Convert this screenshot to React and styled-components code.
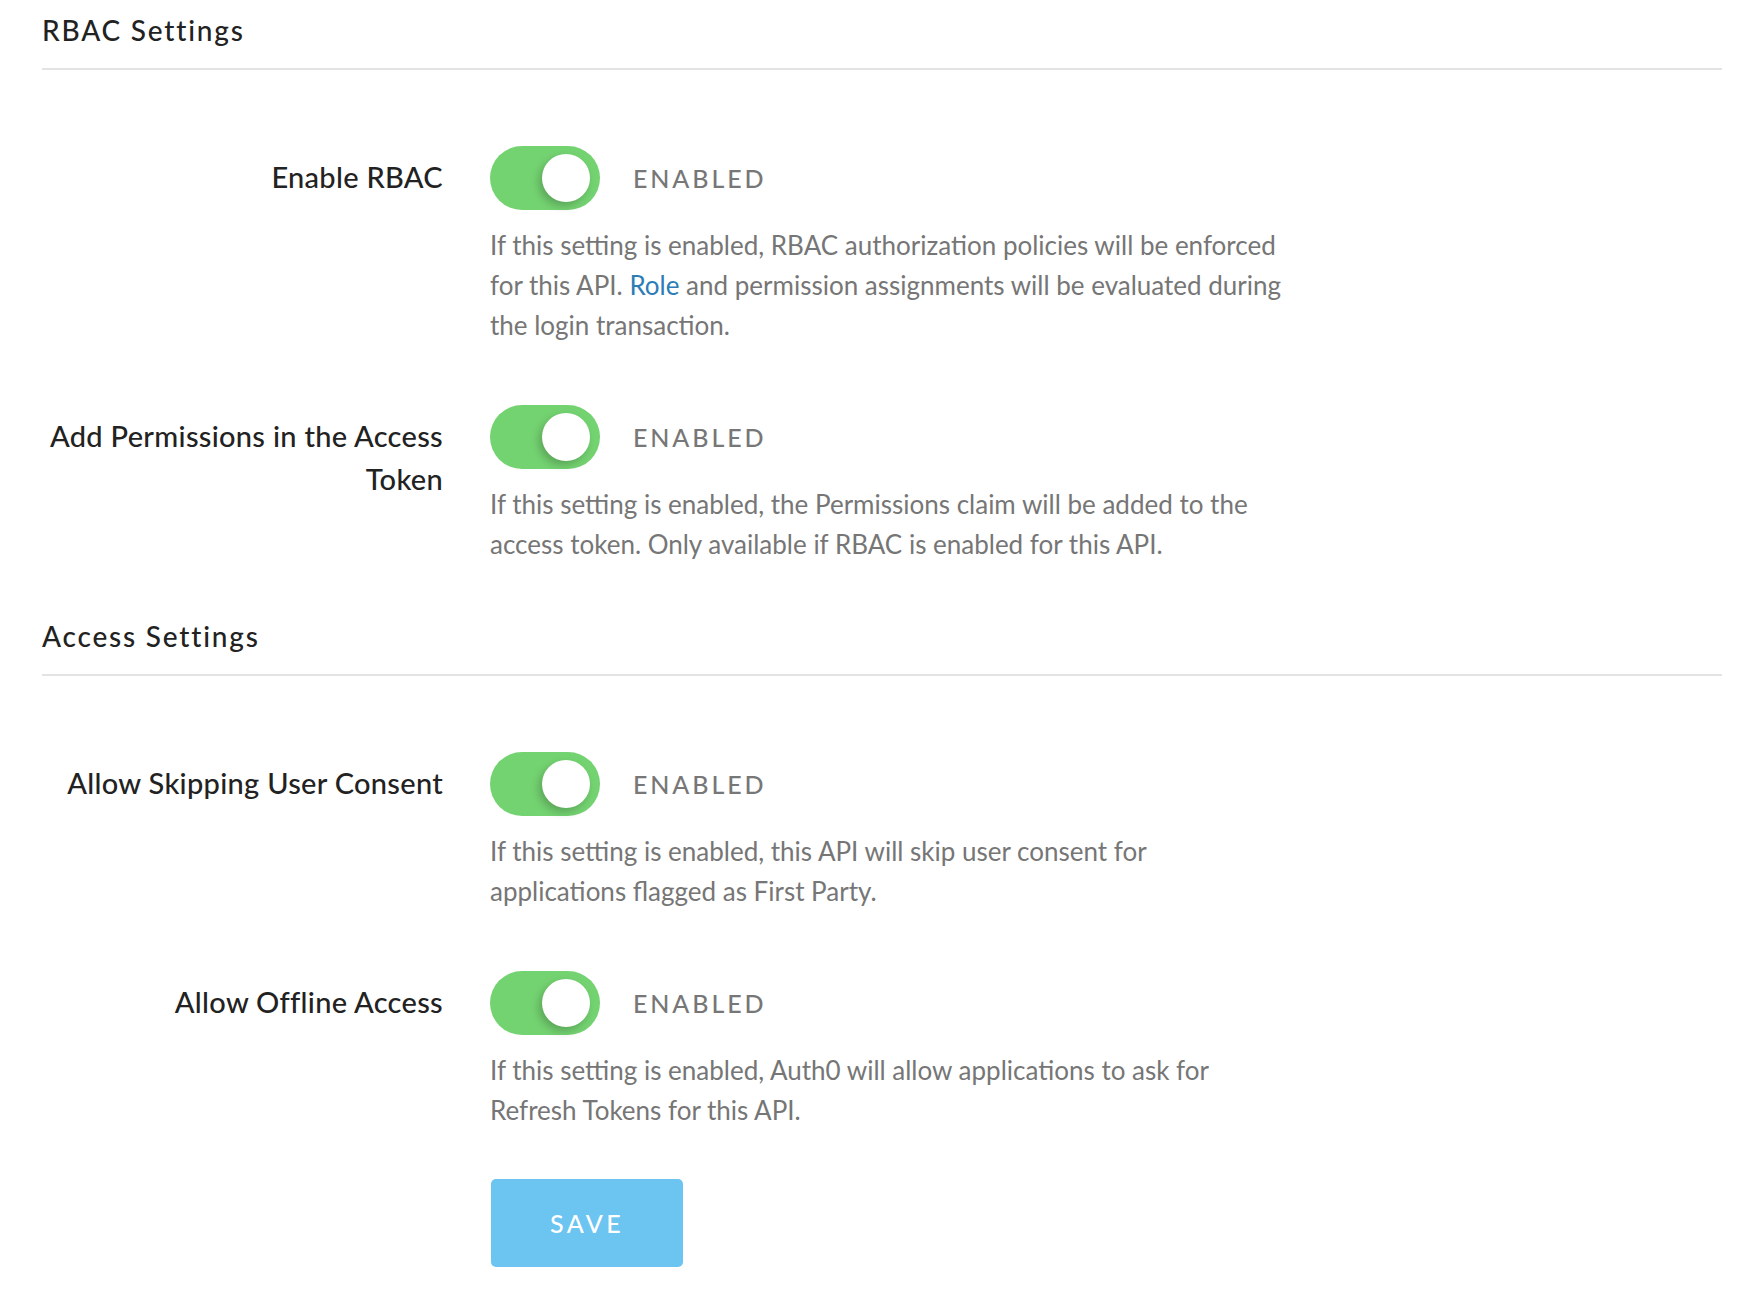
import React, { useState } from 'react'
import styled, { createGlobalStyle } from 'styled-components'

const GlobalStyle = createGlobalStyle`
  html, body {
    margin: 0;
    padding: 0;
    background: #fff;
  }
  body {
    font-family: Lato, "Noto Sans", "Liberation Sans", sans-serif;
    -webkit-font-smoothing: antialiased;
  }
`

// each help text is kept as its visual lines, parts can be plain text or a link
const settings = [
  {
    title: 'RBAC Settings',
    rows: [
      {
        id: 'rbac',
        label: 'Enable RBAC',
        lines: [
          ['If this setting is enabled, RBAC authorization policies will be enforced'],
          ['for this API. ', { link: 'Role' }, ' and permission assignments will be evaluated during'],
          ['the login transaction.'],
        ],
      },
      {
        id: 'permissions',
        label: 'Add Permissions in the Access Token',
        lines: [
          ['If this setting is enabled, the Permissions claim will be added to the'],
          ['access token. Only available if RBAC is enabled for this API.'],
        ],
      },
    ],
  },
  {
    title: 'Access Settings',
    rows: [
      {
        id: 'consent',
        label: 'Allow Skipping User Consent',
        lines: [
          ['If this setting is enabled, this API will skip user consent for'],
          ['applications flagged as First Party.'],
        ],
      },
      {
        id: 'offline',
        label: 'Allow Offline Access',
        lines: [
          ['If this setting is enabled, Auth0 will allow applications to ask for'],
          ['Refresh Tokens for this API.'],
        ],
      },
    ],
  },
]

const Toggle = ({ on, onClick }) => (
  <Track type="button" $on={on} onClick={onClick}>
    <Knob $on={on} />
  </Track>
)

export default function App() {
  const [values, setValues] = useState({
    rbac: true,
    permissions: true,
    consent: true,
    offline: true,
  })

  const flip = (id) => setValues((v) => ({ ...v, [id]: !v[id] }))

  return (
    <Page>
      <GlobalStyle />
      {settings.map((section, i) => (
        <Section key={section.title} $first={i === 0}>
          <Heading>{section.title}</Heading>
          <Rows>
            {section.rows.map((row) => (
              <Row key={row.id}>
                <Label>{row.label}</Label>
                <Field>
                  <SwitchLine>
                    <Toggle on={values[row.id]} onClick={() => flip(row.id)} />
                    <State>{values[row.id] ? 'Enabled' : 'Disabled'}</State>
                  </SwitchLine>
                  <Help>
                    {row.lines.map((line, n) => (
                      <HelpLine key={n}>
                        {line.map((part, k) =>
                          typeof part === 'string'
                            ? part
                            : <Link key={k} href="#">{part.link}</Link>
                        )}
                      </HelpLine>
                    ))}
                  </Help>
                </Field>
              </Row>
            ))}
          </Rows>
        </Section>
      ))}
      <Actions>
        <SaveButton type="button">Save</SaveButton>
      </Actions>
    </Page>
  )
}

const Page = styled.div`
  padding: 0 16px 40px 42px;
  color: #222;
`

const Section = styled.section`
  margin-top: ${({ $first }) => ($first ? '0' : '42px')};
`

const Heading = styled.h2`
  margin: 0;
  padding: 10px 0 18px;
  line-height: 40px;
  font-size: 28px;
  font-weight: 500;
  letter-spacing: 1.8px;
  color: #222;
  border-bottom: 2px solid #e3e3e3;
`

const Rows = styled.div`
  display: flex;
  flex-direction: column;
  gap: 60px;
  padding-top: 76px;
`

const Row = styled.div`
  display: grid;
  grid-template-columns: 401px 1fr;
  column-gap: 47px;
`

const Label = styled.div`
  padding-top: 9px;
  text-align: right;
  font-size: 29px;
  line-height: 43px;
  font-weight: 500;
  letter-spacing: 0.3px;
  color: #222;
`

const Field = styled.div`
  display: flex;
  flex-direction: column;
`

const SwitchLine = styled.div`
  display: flex;
  align-items: center;
  gap: 33px;
  height: 64px;
`

const Track = styled.button`
  position: relative;
  flex: none;
  width: 110px;
  height: 64px;
  padding: 0;
  border: none;
  border-radius: 32px;
  background: ${({ $on }) => ($on ? '#74d371' : '#d6d6d6')};
  cursor: pointer;
`

const Knob = styled.span`
  position: absolute;
  top: 8px;
  left: ${({ $on }) => ($on ? '52px' : '8px')};
  width: 48px;
  height: 48px;
  border-radius: 50%;
  background: #fff;
  box-shadow: -3px 4px 8px rgba(0, 0, 0, 0.22);
`

const State = styled.span`
  font-size: 25px;
  font-weight: 500;
  letter-spacing: 2.9px;
  text-transform: uppercase;
  color: #777;
`

const Help = styled.p`
  margin: 15px 0 0;
  font-size: 26px;
  line-height: 40px;
  color: #767676;
`

const HelpLine = styled.span`
  display: block;
  white-space: nowrap;
`

const Link = styled.a`
  color: #2c7db5;
  text-decoration: none;
`

const Actions = styled.div`
  padding: 49px 0 0 449px;
`

const SaveButton = styled.button`
  width: 192px;
  height: 88px;
  border: none;
  border-radius: 5px;
  background: #6cc4f1;
  color: #fff;
  font-family: inherit;
  font-size: 25px;
  font-weight: 500;
  letter-spacing: 3.4px;
  text-transform: uppercase;
  cursor: pointer;
`
